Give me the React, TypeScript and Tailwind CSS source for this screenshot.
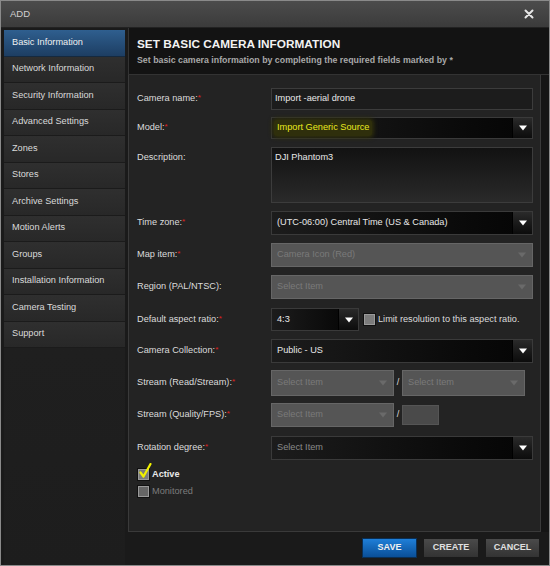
import React from 'react';

const menu = [
  'Basic Information',
  'Network Information',
  'Security Information',
  'Advanced Settings',
  'Zones',
  'Stores',
  'Archive Settings',
  'Motion Alerts',
  'Groups',
  'Installation Information',
  'Camera Testing',
  'Support',
];

function Arrow({ dim }: { dim?: boolean }) {
  return (
    <svg width="8" height="6" viewBox="0 0 8 6" aria-hidden="true">
      <path d="M0 0.5h8L4 5.5z" fill={dim ? '#6a6a6a' : '#ffffff'} />
    </svg>
  );
}

function Label({ text, required }: { text: string; required?: boolean }) {
  return (
    <div className="w-[134px] shrink-0 text-[9.2px] text-[#dcdcdc]">
      {text}
      {required && <span className="text-[#e02020] text-[8px] align-top">*</span>}
    </div>
  );
}

function Select({ value, w, h = 24, children }: { value: string; w?: string; h?: number; children?: React.ReactNode }) {
  return (
    <div
      className={`flex items-stretch border border-[#3a3a3a] bg-gradient-to-r from-[#1c1c1c] to-[#050505] ${w ?? 'flex-1'}`}
      style={{ height: h }}
    >
      <div className="flex-1 flex items-center pl-[5px] text-[9.2px] text-[#e8e8e8]">{children ?? value}</div>
      <div className="w-[20px] flex items-center justify-center bg-gradient-to-b from-[#2a2a2a] to-[#0c0c0c] border-l border-[#000]">
        <Arrow />
      </div>
    </div>
  );
}

function Disabled({ value, w, h = 24 }: { value: string; w?: string; h?: number }) {
  return (
    <div
      className={`flex items-center border border-[#666] bg-[#555] pl-[5px] pr-[6px] text-[9.2px] text-[#7a7a7a] ${w ?? 'flex-1'}`}
      style={{ height: h }}
    >
      <span className="flex-1">{value}</span>
      <Arrow dim />
    </div>
  );
}

function Box({ checked, dim }: { checked?: boolean; dim?: boolean }) {
  return (
    <span
      className={`relative block w-[13px] h-[13px] shrink-0 border border-[#111] shadow-[inset_0_0_0_1px_#9a9a9a] ${
        dim ? 'bg-[#666]' : 'bg-[#7c7c7c]'
      }`}
    >
      {checked && (
        <svg className="absolute left-[1px] -top-[6px]" width="13" height="16" viewBox="0 0 13 16" aria-hidden="true">
          <path d="M1.5 9.5L4.5 13.5L11.5 1" fill="none" stroke="#f2f200" strokeWidth="2.2" strokeLinecap="round" strokeLinejoin="round" />
        </svg>
      )}
    </span>
  );
}

export default function App() {
  return (
    <div className="w-[550px] h-[566px] bg-[#1a1a1a] border border-[#8a8a8a] flex flex-col font-['Liberation_Sans',Arial,sans-serif] overflow-hidden">
      {/* Title bar */}
      <div className="h-[27px] shrink-0 flex items-center justify-between px-[9px] bg-gradient-to-b from-[#4c4c4c] to-[#3b3b3b] border-b border-[#222]">
        <span className="text-[9.5px] text-[#d0d0d0]">ADD</span>
        <svg width="10" height="10" viewBox="0 0 10 10" className="mr-[6px]" aria-hidden="true">
          <path d="M1.5 1.5l7 7M8.5 1.5l-7 7" stroke="#e6e6e6" strokeWidth="2" strokeLinecap="round" />
        </svg>
      </div>

      <div className="flex-1 flex">
        {/* Sidebar */}
        <div className="w-[121px] ml-[3px] mt-[2px] flex flex-col bg-gradient-to-b from-[#222] to-[#1d1d1d]">
          {menu.map((m, i) => (
            <div
              key={m}
              className={`h-[26.5px] shrink-0 flex items-center pl-[8px] text-[9.2px] border-b ${
                i === 0
                  ? 'bg-gradient-to-b from-[#2f5f8f] to-[#1d3e63] text-[#f0f0f0] border-[#15293f]'
                  : 'bg-gradient-to-b from-[#2f2f2f] to-[#282828] text-[#dadada] border-[#1b1b1b]'
              }`}
            >
              {m}
            </div>
          ))}
          <div className="flex-1" />
        </div>

        {/* Main */}
        <div className="flex-1 ml-[3px] flex flex-col">
          <div className="h-[47px] shrink-0 bg-[#131313] border-l border-b border-[#333] pl-[8px] pt-[8px]">
            <div className="text-[11.8px] font-bold text-[#f2f2f2] leading-[16px]">SET BASIC CAMERA INFORMATION</div>
            <div className="mt-[2px] text-[8.8px] font-bold text-[#a8a8a8]">
              Set basic camera information by completing the required fields marked by *
            </div>
          </div>

          <div className="flex">
            <div className="w-[413px] h-[457px] bg-[#232323] border-l border-b border-r border-[#3a3a3a] pl-[8px] pr-[7px] pt-[13px] flex flex-col">
              <div className="flex items-center h-[22px]">
                <Label text="Camera name:" required />
                <div className="flex-1 h-full flex items-center border border-[#3c3c3c] bg-[#1c1c1c] pl-[3px] text-[9.2px] text-[#e8e8e8]">
                  Import -aerial drone
                </div>
              </div>

              <div className="flex items-center mt-[7px]">
                <Label text="Model:" required />
                <Select value="" h={22}>
                  <span className="bg-[#2f2f0c] rounded-[3px] px-[3px] -ml-[3px] py-[1px] text-[#eaea1e] shadow-[0_0_4px_2px_#2f2f0c]">
                    Import Generic Source
                  </span>
                </Select>
              </div>

              <div className="flex items-start mt-[8px]">
                <div className="pt-[4px]">
                  <Label text="Description:" />
                </div>
                <div className="flex-1 h-[56px] border border-[#3c3c3c] bg-gradient-to-b from-[#121212] to-[#2a2a2a] pl-[3px] pt-[3px] text-[9.2px] text-[#e8e8e8]">
                  DJI Phantom3
                </div>
              </div>

              <div className="flex items-center mt-[8px]">
                <Label text="Time zone:" required />
                <Select value="(UTC-06:00) Central Time (US & Canada)" />
              </div>

              <div className="flex items-center mt-[8px]">
                <Label text="Map item:" required />
                <Disabled value="Camera Icon (Red)" />
              </div>

              <div className="flex items-center mt-[8px]">
                <Label text="Region (PAL/NTSC):" />
                <Disabled value="Select Item" />
              </div>

              <div className="flex items-center mt-[9px]">
                <Label text="Default aspect ratio:" required />
                <Select value="4:3" w="w-[88px]" h={23} />
                <span className="ml-[4px] mr-[2px]">
                  <Box />
                </span>
                <span className="text-[9.2px] text-[#dcdcdc]">Limit resolution to this aspect ratio.</span>
              </div>

              <div className="flex items-center mt-[8px]">
                <Label text="Camera Collection:" required />
                <Select value="Public - US" />
              </div>

              <div className="flex items-center mt-[7px]">
                <Label text="Stream (Read/Stream):" required />
                <Disabled value="Select Item" w="w-[123px]" h={26} />
                <span className="w-[8px] text-center text-[9.2px] text-[#dcdcdc]">/</span>
                <Disabled value="Select Item" w="w-[123px]" h={26} />
              </div>

              <div className="flex items-center mt-[7px]">
                <Label text="Stream (Quality/FPS):" required />
                <Disabled value="Select Item" w="w-[123px]" />
                <span className="w-[8px] text-center text-[9.2px] text-[#dcdcdc]">/</span>
                <div className="w-[37px] h-[20px] border border-[#555] bg-[#4a4a4a]" />
              </div>

              <div className="flex items-center mt-[9px]">
                <Label text="Rotation degree:" required />
                <Select value="">
                  <span className="text-[#8a8a8a]">Select Item</span>
                </Select>
              </div>

              <div className="flex items-center mt-[8px] gap-[2px]">
                <Box checked />
                <span className="text-[9.2px] font-bold text-[#e8e8e8]">Active</span>
              </div>
              <div className="flex items-center mt-[3px] gap-[2px]">
                <Box dim />
                <span className="text-[9.2px] text-[#7c7c7c]">Monitored</span>
              </div>
            </div>
            <div className="flex-1 bg-[#151515]" />
          </div>

          <div className="flex-1 flex items-start justify-end gap-[6px] pt-[6px] pr-[9px]">
            <button className="w-[55px] h-[20px] text-[9px] font-bold text-[#f0f0f0] bg-gradient-to-b from-[#1f7fd8] to-[#0a4f98] border border-[#0a2f55]">
              SAVE
            </button>
            <button className="w-[56px] h-[20px] text-[9px] font-bold text-[#e0e0e0] bg-gradient-to-b from-[#4a4a4a] to-[#333] border border-[#1a1a1a]">
              CREATE
            </button>
            <button className="w-[55px] h-[20px] text-[9px] font-bold text-[#e0e0e0] bg-gradient-to-b from-[#4a4a4a] to-[#333] border border-[#1a1a1a]">
              CANCEL
            </button>
          </div>
        </div>
      </div>
    </div>
  );
}
